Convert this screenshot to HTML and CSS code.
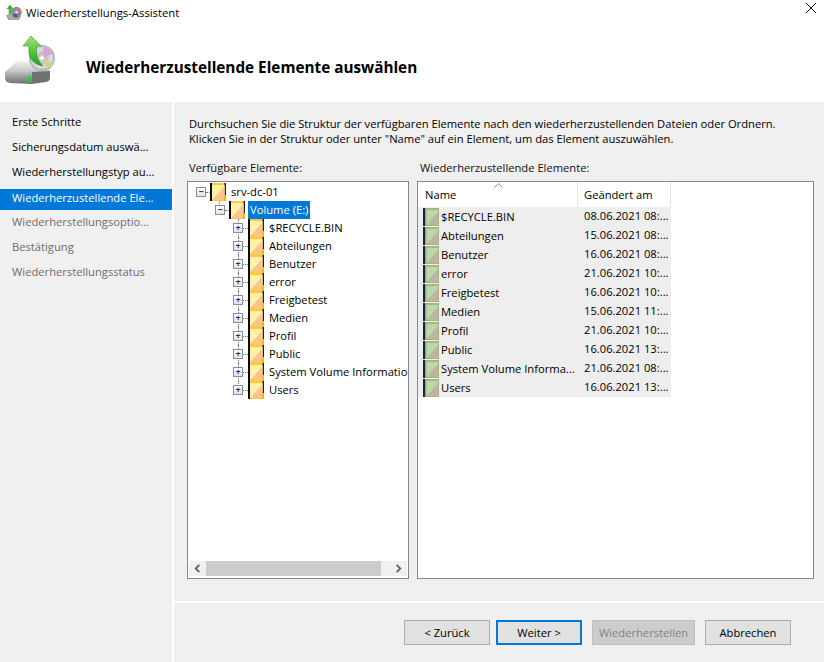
FILE: index.html
```html
<!DOCTYPE html>
<html lang="de">
<head>
<meta charset="utf-8">
<title>Wiederherstellungs-Assistent</title>
<link rel="stylesheet" href="styles.css">
</head>
<body>
<svg class="defs" width="0" height="0" aria-hidden="true">
  <defs>
    <symbol id="folder" viewBox="0 0 16 18">
      <rect x="0" y="0" width="16" height="18" fill="#ffc93c"/>
      <rect x="0" y="0" width="2" height="18" fill="#0b0b0b"/>
      <rect x="14.5" y="0" width="1.5" height="13" fill="#1a1a1a"/>
      <path d="M2 2H14.5V17H2Z" fill="#fff0a8"/>
      <path d="M2 17L14.5 3.5V17Z" fill="#f9c58d"/>
      <rect x="14" y="12" width="2" height="6" fill="#f2b705"/>
    </symbol>
    <symbol id="file" viewBox="0 0 16 18">
      <rect x="0" y="0" width="2.5" height="18" fill="#12263a"/>
      <rect x="2.5" y="0" width="13.5" height="18" fill="#a9b57f"/>
      <path d="M3.5 2H15V17H3.5Z" fill="#bcd8a6"/>
      <path d="M3.5 17L15 4V17Z" fill="#bdb5a4"/>
    </symbol>
    <symbol id="hdd" viewBox="0 0 60 56">
      <defs>
        <linearGradient id="hddtop" x1="0" y1="0" x2="0" y2="1"><stop offset="0" stop-color="#f2f4f2"/><stop offset="1" stop-color="#a9adaa"/></linearGradient>
        <linearGradient id="hddfront" x1="0" y1="0" x2="0" y2="1"><stop offset="0" stop-color="#b9bcba"/><stop offset="1" stop-color="#6c706e"/></linearGradient>
        <linearGradient id="arrowg" x1="0" y1="0" x2="0" y2="1"><stop offset="0" stop-color="#9be86a"/><stop offset="1" stop-color="#1c9d22"/></linearGradient>
        <radialGradient id="disc"><stop offset="0.18" stop-color="#f4f4f4"/><stop offset="0.3" stop-color="#b9bcbc"/><stop offset="0.7" stop-color="#dfe3e3"/><stop offset="1" stop-color="#a8acac"/></radialGradient>
      </defs>
      <path d="M1 37L13 26H40L46 36L42 40L4 42Z" fill="url(#hddtop)"/>
      <path d="M1 37L28 37V49L6 48Q1 47 1 43Z" fill="url(#hddfront)"/>
      <path d="M28 37L46 36V43Q46 46 42 47L28 49Z" fill="#6e7370"/>
      <rect x="24" y="41" width="3" height="6" fill="#3cc23c"/>
      <circle cx="38" cy="23" r="13" fill="url(#disc)"/>
      <path d="M39 12A12 12 0 0 1 49 19L40 22Z" fill="#d9a5d0"/>
      <path d="M49 27A12 12 0 0 1 43 34L39 25Z" fill="#d9d48a"/>
      <circle cx="38" cy="23" r="2.4" fill="#fff" stroke="#9a9d9d" stroke-width="0.6"/>
      <path d="M27 1L37 11H32.5V16Q32.5 25 39 31Q30 30 26 22Q24 17 25 11H19Z" fill="url(#arrowg)" stroke="#3a9a2c" stroke-width="0.6"/>
    </symbol>
    <symbol id="appicon" viewBox="0 0 22 22">
      <path d="M2 14L6 12H17L19 16L17 19H4Z" fill="#a9adaa" stroke="#6c706e" stroke-width="0.6"/>
      <circle cx="14" cy="10" r="6.5" fill="#8d8d95"/>
      <path d="M14 4A6 6 0 0 1 20 10L14 10Z" fill="#c678a0"/>
      <path d="M14 10L9 14A6 6 0 0 0 16 16Z" fill="#4c5f8f"/>
      <circle cx="14" cy="10" r="1.5" fill="#eee"/>
      <path d="M6 1L10.5 6H8V12H4.5V6H2Z" fill="#3fae33"/>
    </symbol>
  </defs>
</svg>
<div class="window">
  <div class="titlebar">
    <svg class="app-icon"><use href="#appicon"/></svg>
    <span class="title">Wiederherstellungs-Assistent</span>
    <svg class="close" viewBox="0 0 10 10"><path d="M0 0L10 10M10 0L0 10" stroke="#111" stroke-width="1"/></svg>
  </div>
  <header class="header">
    <svg class="hdd"><use href="#hdd"/></svg>
    <h1>Wiederherzustellende Elemente auswählen</h1>
  </header>
  <div class="content">
    <nav class="steps">
      <div class="step">Erste Schritte</div>
      <div class="step">Sicherungsdatum auswä...</div>
      <div class="step">Wiederherstellungstyp au...</div>
      <div class="step current">Wiederherzustellende Ele...</div>
      <div class="step off">Wiederherstellungsoptio...</div>
      <div class="step off">Bestätigung</div>
      <div class="step off">Wiederherstellungsstatus</div>
    </nav>
    <main class="main">
      <div class="body">
        <p class="intro">Durchsuchen Sie die Struktur der verfügbaren Elemente nach den wiederherzustellenden Dateien oder Ordnern.<br>Klicken Sie in der Struktur oder unter "Name" auf ein Element, um das Element auszuwählen.</p>
        <div class="panes">
          <section class="pane pane-tree">
            <div class="pane-label">Verfügbare Elemente:</div>
            <div class="box tree-box">
              <div class="tree">
                <div class="node l0"><span class="exp">−</span><i class="dots"></i><svg class="ic"><use href="#folder"/></svg><span class="lbl">srv-dc-01</span></div>
                <div class="node l1"><span class="exp">−</span><i class="dots"></i><svg class="ic"><use href="#folder"/></svg><span class="lbl sel">Volume (E:)</span></div>
                <div class="node l2"><span class="exp">+</span><i class="dots"></i><svg class="ic"><use href="#folder"/></svg><span class="lbl">$RECYCLE.BIN</span></div>
                <div class="node l2"><span class="exp">+</span><i class="dots"></i><svg class="ic"><use href="#folder"/></svg><span class="lbl">Abteilungen</span></div>
                <div class="node l2"><span class="exp">+</span><i class="dots"></i><svg class="ic"><use href="#folder"/></svg><span class="lbl">Benutzer</span></div>
                <div class="node l2"><span class="exp">+</span><i class="dots"></i><svg class="ic"><use href="#folder"/></svg><span class="lbl">error</span></div>
                <div class="node l2"><span class="exp">+</span><i class="dots"></i><svg class="ic"><use href="#folder"/></svg><span class="lbl">Freigbetest</span></div>
                <div class="node l2"><span class="exp">+</span><i class="dots"></i><svg class="ic"><use href="#folder"/></svg><span class="lbl">Medien</span></div>
                <div class="node l2"><span class="exp">+</span><i class="dots"></i><svg class="ic"><use href="#folder"/></svg><span class="lbl">Profil</span></div>
                <div class="node l2"><span class="exp">+</span><i class="dots"></i><svg class="ic"><use href="#folder"/></svg><span class="lbl">Public</span></div>
                <div class="node l2"><span class="exp">+</span><i class="dots"></i><svg class="ic"><use href="#folder"/></svg><span class="lbl">System Volume Information</span></div>
                <div class="node l2"><span class="exp">+</span><i class="dots"></i><svg class="ic"><use href="#folder"/></svg><span class="lbl">Users</span></div>
              </div>
              <div class="hscroll">
                <svg class="arrow" viewBox="0 0 8 10"><path d="M6 1L2 5L6 9" fill="none" stroke="#606060" stroke-width="2"/></svg>
                <div class="thumb"></div>
                <svg class="arrow arrow-end" viewBox="0 0 8 10"><path d="M2 1L6 5L2 9" fill="none" stroke="#606060" stroke-width="2"/></svg>
              </div>
            </div>
          </section>
          <section class="pane pane-list">
            <div class="pane-label">Wiederherzustellende Elemente:</div>
            <div class="box list-box">
              <div class="list-head">
                <div class="col col-name">Name<svg class="sort" viewBox="0 0 9 5"><path d="M0.5 4.5L4.5 0.5L8.5 4.5" fill="none" stroke="#8a8a8a"/></svg></div>
                <div class="col col-date">Geändert am</div>
              </div>
              <div class="row"><div class="cell-name"><svg class="ic-file"><use href="#file"/></svg><span>$RECYCLE.BIN</span></div><div class="cell-date">08.06.2021 08:...</div></div>
              <div class="row"><div class="cell-name"><svg class="ic-file"><use href="#file"/></svg><span>Abteilungen</span></div><div class="cell-date">15.06.2021 08:...</div></div>
              <div class="row"><div class="cell-name"><svg class="ic-file"><use href="#file"/></svg><span>Benutzer</span></div><div class="cell-date">16.06.2021 08:...</div></div>
              <div class="row"><div class="cell-name"><svg class="ic-file"><use href="#file"/></svg><span>error</span></div><div class="cell-date">21.06.2021 10:...</div></div>
              <div class="row"><div class="cell-name"><svg class="ic-file"><use href="#file"/></svg><span>Freigbetest</span></div><div class="cell-date">16.06.2021 10:...</div></div>
              <div class="row"><div class="cell-name"><svg class="ic-file"><use href="#file"/></svg><span>Medien</span></div><div class="cell-date">15.06.2021 11:...</div></div>
              <div class="row"><div class="cell-name"><svg class="ic-file"><use href="#file"/></svg><span>Profil</span></div><div class="cell-date">21.06.2021 10:...</div></div>
              <div class="row"><div class="cell-name"><svg class="ic-file"><use href="#file"/></svg><span>Public</span></div><div class="cell-date">16.06.2021 13:...</div></div>
              <div class="row"><div class="cell-name"><svg class="ic-file"><use href="#file"/></svg><span>System Volume Informa...</span></div><div class="cell-date">21.06.2021 08:...</div></div>
              <div class="row"><div class="cell-name"><svg class="ic-file"><use href="#file"/></svg><span>Users</span></div><div class="cell-date">16.06.2021 13:...</div></div>
            </div>
          </section>
        </div>
      </div>
      <footer class="footer">
        <button class="btn">&lt; Zurück</button>
        <button class="btn primary">Weiter &gt;</button>
        <button class="btn restore" disabled>Wiederherstellen</button>
        <button class="btn cancel">Abbrechen</button>
      </footer>
    </main>
  </div>
</div>
</body>
</html>
```

FILE: styles.css
```css
* { box-sizing: border-box; }
html, body { margin: 0; padding: 0; }
body {
  width: 824px;
  height: 662px;
  overflow: hidden;
  background: #fff;
  font-family: "Open Sans", "Noto Sans", sans-serif;
  font-size: 11.2px;
  color: #000;
}
.defs { position: absolute; }
.window { width: 824px; height: 662px; display: flex; flex-direction: column; }

.titlebar { height: 25px; flex: none; display: flex; align-items: center; padding-left: 5px; }
.app-icon { width: 18px; height: 18px; flex: none; }
.title { margin-left: 3px; font-size: 11.3px; }
.close { width: 10px; height: 10px; margin-left: auto; margin-right: 8px; margin-top: -9px; }

.header { height: 77px; flex: none; display: flex; align-items: flex-start; padding-left: 4px; }
.hdd { width: 60px; height: 56px; flex: none; margin-top: 10px; }
.header h1 { margin: 32px 0 0 22px; font-size: 15.3px; font-weight: 700; line-height: 20px; }

.content { flex: 1; display: flex; min-height: 0; }
.steps { width: 172px; flex: none; background: #f0f0f0; padding-top: 7px; }
.step { height: 25px; padding-left: 12px; line-height: 25px; white-space: nowrap; }
.step.current { background: #0078d7; color: #fff; height: 21px; line-height: 17px; margin: 5px 0 -1px; }
.step.off { color: #6d6d6d; }

.main { flex: 1; margin-left: 2px; background: #f0f0f0; display: flex; flex-direction: column; min-width: 0; }
.body { flex: 1; padding: 14px 10px 0 13px; min-height: 0; }
.intro { margin: 0; line-height: 15px; white-space: nowrap; padding-left: 2px; }
.panes { display: flex; gap: 8px; margin-top: 15px; }
.pane-tree { width: 222px; flex: none; }
.pane-list { flex: 1; min-width: 0; }
.pane-label { height: 20px; line-height: 14px; padding-left: 2px; color: #111; }
.pane-list .pane-label { padding-left: 3px; }
.box { height: 398px; background: #fff; border: 1px solid #828790; }

.tree-box { display: flex; flex-direction: column; }
.tree { flex: 1; padding-top: 1px; overflow: hidden; }
.node { height: 18px; display: flex; align-items: center; white-space: nowrap; position: relative; }
.node.l0 { padding-left: 8px; }
.node.l1 { padding-left: 27px; }
.node.l2 { padding-left: 45px; }
.node.l1::before,
.node.l2::before {
  content: "";
  position: absolute;
  top: 0;
  bottom: 0;
  border-left: 1px dotted #777;
}
.node.l1::before { left: 31px; bottom: 13px; }
.node.l2::before { left: 50px; }
.node.l2:last-child::before { bottom: 9px; }
.exp {
  width: 10px; height: 10px; flex: none;
  border: 1px solid #8a8f96;
  background: linear-gradient(#fff, #dfe3e8);
  font-size: 9px; line-height: 7px; text-align: center; color: #233a66;
  font-weight: 700;
  position: relative;
  z-index: 1;
}
.dots { width: 4px; flex: none; border-top: 1px dotted #777; }
.l2 .dots { width: 5px; }
.ic { width: 16px; height: 18px; flex: none; }
.lbl { margin-left: 5px; line-height: 16px; }
.lbl.sel { background: #0078d7; color: #fff; margin-left: 3px; padding: 0 2px; height: 18px; line-height: 17px; }

.hscroll { height: 15px; margin: 0 1px 2px 1px; flex: none; display: flex; align-items: center; background: #f0f0f0; }
.arrow { width: 17px; height: 9px; flex: none; }
.arrow-end { margin-left: auto; }
.thumb { width: 175px; height: 15px; background: #cdcdcd; }

.list-head { height: 25px; display: flex; background: #fff; }
.col { height: 25px; padding-left: 7px; line-height: 26px; border-right: 1px solid #e5e5e5; position: relative; }
.col-name { width: 160px; line-height: 25px; }
.col-date { width: 93px; padding-left: 6px; line-height: 26px; }
.sort { position: absolute; left: 76px; top: 1px; width: 9px; height: 5px; }
.row { height: 19px; width: 253px; display: flex; background: #eeeeee; line-height: 18px; }
.cell-name { width: 160px; display: flex; align-items: center; padding-left: 5px; white-space: nowrap; }
.ic-file { width: 16px; height: 18px; flex: none; margin-right: 2px; }
.cell-date { width: 93px; padding-left: 6px; white-space: nowrap; }

.footer {
  height: 61px; flex: none;
  border-top: 2px solid #fff;
  display: flex; align-items: flex-start;
  padding: 17px 0 0 230px;
}
.btn {
  height: 25px; margin: 0; padding: 0;
  font: inherit; line-height: 20px; color: #000;
  background: #e1e1e1; border: 1px solid #adadad; border-radius: 0;
  width: 86px;
}
.btn.primary { border: 2px solid #0078d7; margin-left: 6px; }
.btn.restore { width: 103px; margin-left: 10px; background: #cccccc; border-color: #bfbfbf; color: #838383; }
.btn.cancel { margin-left: 10px; }
```
